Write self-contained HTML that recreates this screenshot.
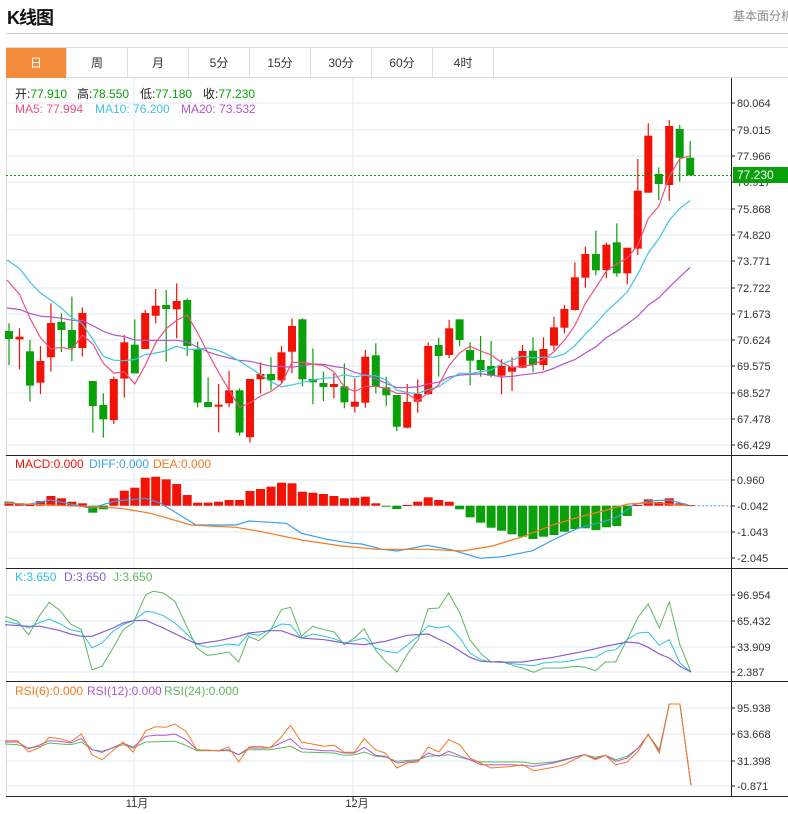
<!DOCTYPE html>
<html><head><meta charset="utf-8">
<style>
html,body{margin:0;padding:0;background:#fff;width:788px;height:814px;overflow:hidden;font-family:"Liberation Sans","Noto Sans CJK SC",sans-serif;}
.title{position:absolute;left:7px;top:4px;font-size:18px;font-weight:bold;color:#111;letter-spacing:-1px}
.rt{position:absolute;left:733px;top:7px;font-size:12px;color:#888;white-space:nowrap}
.hr{position:absolute;left:6px;top:33px;width:782px;height:1px;background:#ccc}
.tabs{position:absolute;left:6px;top:47px;width:782px;height:31px;border-top:1px solid #ddd;border-bottom:1px solid #ddd;box-sizing:border-box}
.tab{position:absolute;top:0;height:30px;width:61px;border-right:1px solid #ddd;box-sizing:border-box;font-size:12px;color:#333;text-align:center;line-height:30px}
.tab.on{background:#f28c3c;color:#fff}
svg{position:absolute;left:0;top:0}
</style></head><body>
<div class="title">K线图</div>
<div class="rt">基本面分析</div>
<div class="hr"></div>
<div class="tabs">
<div class="tab on" style="left:0">日</div>
<div class="tab" style="left:61px">周</div>
<div class="tab" style="left:122px">月</div>
<div class="tab" style="left:183px">5分</div>
<div class="tab" style="left:244px">15分</div>
<div class="tab" style="left:305px">30分</div>
<div class="tab" style="left:366px">60分</div>
<div class="tab" style="left:427px">4时</div>
</div>
<svg id="s" width="788" height="814" xmlns="http://www.w3.org/2000/svg" font-family="Liberation Sans, Noto Sans CJK SC, sans-serif"></svg>
<script>
var S=document.getElementById('s'),h='';
function L(x1,y1,x2,y2,c,w,extra){h+='<line x1="'+x1+'" y1="'+y1+'" x2="'+x2+'" y2="'+y2+'" stroke="'+c+'" stroke-width="'+(w||1)+'" '+(extra||'')+'/>';}
function T(x,y,t,c,s,a){h+='<text x="'+x+'" y="'+y+'" fill="'+c+'" font-size="'+(s||11)+'"'+(a?' text-anchor="'+a+'"':'')+'>'+t+'</text>';}
function P(pts,c,w){h+='<polyline fill="none" stroke="'+c+'" stroke-width="'+(w||1)+'" points="'+pts.map(function(p){return p[0].toFixed(1)+','+p[1].toFixed(1)}).join(' ')+'"/>';}
var G='#e6edf3';
[103,130,156,182,209,235,261,288,314,340,366,393,419,445,480,506,532,558,595,621,647,672,708,734,761,786].forEach(function(y){L(6,y,731,y,G,1.3);});
L(134,78,134,797,G,1.3);L(353,78,353,797,G,1.3);
L(6.5,78,6.5,797,'#ddd');
L(731.5,78,731.5,797,'#222');
[455,568,681,796].forEach(function(y){L(6,y+.5,788,y+.5,'#222');});
function AX(arr){arr.forEach(function(a){L(731,a[1],735,a[1],'#222');T(737,a[1]+4,a[0],'#333',11);});}
AX([['80.064',103],['79.015',130],['77.966',156],['76.917',182],['75.868',209],['74.820',235],['73.771',261],['72.722',288],['71.673',314],['70.624',340],['69.575',366],['68.527',393],['67.478',419],['66.429',445]]);
AX([['0.960',480],['-0.042',506],['-1.043',532],['-2.045',558]]);
AX([['96.954',595],['65.432',621],['33.909',647],['2.387',672]]);
AX([['95.938',708],['63.668',734],['31.398',761],['-0.871',786]]);
T(137,807,'11月','#333',11,'middle');T(357,807,'12月','#333',11,'middle');
L(134,797,134,800,'#222');L(353,797,353,800,'#222');
var A=[['G',183,207,160,285],['R',200,208,175,298],['G',244,347,210,395],['R',273,338,228,372],['R',159,262,100,305],['G',156,180,130,246],['G',180,234,80,274],['R',129,234,112,260],['G',333,408,333,488],['G',405,448,370,503],['R',327,450,320,462],['R',217,326,195,383],['G',224,310,148,310],['R',129,237,120,237],['R',107,137,57,160],['G',105,117,60,275],['R',93,118,40,205],['G',90,228,85,258],['G',238,398,215,412],['G',396,411,322,411],['R',404,410,342,487],['R',361,400,303,412],['G',361,488,355,497],['R',327,502,327,518],['R',312,328,277,370],['G',312,331,262,360],['R',247,331,228,340],['R',168,245,145,310],['G',148,328,145,350],['G',327,337,235,403],['G',339,351,305,393],['R',342,351,310,385],['G',349,397,280,415],['R',395,410,325,428]];
var B=[['R',740,878,720,893],['G',736,830,700,850],['G',832,856,800,888],['G',855,950,855,963],['R',876,953,822,955],['R',852,875,808,908],['R',708,852,697,855],['G',705,738,683,800],['R',655,735,630,745],['G',628,690,628,708],['G',720,752,697,826],['G',750,780,678,800],['G',768,797,693,802],['R',768,797,748,853],['R',770,785,742,843],['R',723,773,705,775],['G',722,765,682,787],['R',717,765,682,780],['R',652,707,620,722],['R',597,653,585,670],['R',502,600,457,602],['R',432,503,410,533],['G',432,481,362,496],['R',404,480,398,505],['G',397,490,340,500],['R',413,490,413,523],['R',242,416,147,435],['R',77,248,40,248],['G',192,222,172,270],['R',48,225,30,273],['G',57,143,45,215],['G',143,196,93,196]];
var C=[];
A.forEach(function(c){C.push([c[0],c[1]/3+270,c[2]/3+270,c[3]/3+270,c[4]/3+270]);});
B.forEach(function(c){C.push([c[0],c[1]/3+110,c[2]/3+110,c[3]/3+110,c[4]/3+110]);});
var RED='#f21306',GRN='#0aa00a',sp=10.48;
var closes=[];
C.forEach(function(c,i){var x=9+i*sp,col=c[0]=='R'?RED:GRN;
 L(x,c[3],x,c[4],col,1.2);
 var hh=Math.max(1.5,c[2]-c[1]);
 h+='<rect x="'+(x-4).toFixed(1)+'" y="'+c[1].toFixed(1)+'" width="8" height="'+hh.toFixed(1)+'" fill="'+col+'"/>';
 closes.push(c[0]=='R'?c[1]:c[2]);});
function MA(N,start){var pad=(N*start-closes[0])/(N-1),out=[];
 for(var i=0;i<closes.length;i++){var s=0;for(var k=i-N+1;k<=i;k++){s+=k<0?pad:closes[k];}out.push([9+i*sp,s/N]);}
 out[0][0]=7;return out;}
P(MA(20,308),'#b455cc',1.2);P(MA(10,260),'#3ec6e0',1.2);P(MA(5,280),'#f0507e',1.2);
L(6,175.5,731,175.5,'#0a9a0a',1,'stroke-dasharray="2,2"');
h+='<rect x="733" y="167" width="55" height="16" fill="#0aa00a"/>';T(737,179,'77.230','#fff',12);
T(15,98,'开:<tspan fill="#0aa00a">77.910</tspan>','#222',12);
T(77,98,'高:<tspan fill="#0aa00a">78.550</tspan>','#222',12);
T(140,98,'低:<tspan fill="#0aa00a">77.180</tspan>','#222',12);
T(203,98,'收:<tspan fill="#0aa00a">77.230</tspan>','#222',12);
T(15,113,'MA5: 77.994','#f0507e',12);T(95,113,'MA10: 76.200','#3ec6e0',12);T(181,113,'MA20: 73.532','#b455cc',12);
T(15,468,'MACD:0.000','#f21306',12);T(89,468,'DIFF:0.000','#3a9ef0',12);T(153,468,'DEA:0.000','#f57a1e',12);
var M=[185,190,195,183,168,175,185,190,218,208,175,152,143,113,110,118,132,165,188,188,185,180,180,153,147,140,128,130,155,158,162,168,175,173,170,190,200,207,195,185,172,180,185,208,232,248,263,272,283,290,297,290,285,275,267,265,270,262,258,228,195,178,186,175,190,195];
var z=505.7;
M.forEach(function(v,i){var x=9+i*sp,y=v/3+440,col=y<z?RED:GRN;var t=Math.min(y,z),hh=Math.max(1,Math.abs(y-z));
 h+='<rect x="'+(x-4.5).toFixed(1)+'" y="'+t.toFixed(1)+'" width="9" height="'+hh.toFixed(1)+'" fill="'+col+'"/>';});
function cv(a,oy){return a.map(function(p){return [p[0]/1.99,p[1]/3+oy];});}
P(cv([[10,185],[50,195],[100,180],[150,195],[180,205],[230,183],[290,175],[320,190],[390,255],[470,255],[495,243],[570,250],[600,280],[650,298],[700,310],[720,312],[760,328],[790,333],[850,316],[900,330],[955,355],[1000,350],[1060,332],[1100,300],[1150,265],[1200,245],[1230,230],[1260,195],[1290,183],[1330,180],[1370,195]],440),'#3a9ef0',1.2);
P(cv([[10,190],[100,195],[180,200],[240,205],[300,220],[380,255],[470,262],[520,275],[600,300],[680,318],[750,328],[850,328],[920,333],[980,318],[1040,290],[1100,255],[1150,232],[1200,213],[1250,192],[1300,188],[1370,197]],440),'#f57a1e',1.2);
L(690,z,731,z,'#7ab8e8',1,'stroke-dasharray="2,2"');
T(15,581,'K:3.650','#2ec4dd',12);T(64,581,'D:3.650','#8a5cd0',12);T(113,581,'J:3.650','#5cb85c',12);
P(cv([[10,145],[35,160],[57,200],[80,140],[98,103],[120,128],[140,168],[162,185],[183,305],[203,295],[225,240],[245,185],[265,165],[290,80],[305,70],[325,75],[348,100],[370,170],[392,240],[412,262],[435,258],[455,252],[475,282],[495,205],[515,218],[537,190],[560,125],[578,118],[600,205],[622,175],[645,185],[665,192],[685,230],[705,210],[725,182],[747,245],[767,280],[790,312],[810,260],[832,215],[852,122],[873,120],[893,75],[915,135],[935,215],[957,257],[977,282],[997,280],[1020,292],[1040,300],[1062,313],[1082,300],[1102,300],[1122,300],[1143,295],[1163,297],[1185,308],[1205,282],[1225,282],[1248,215],[1270,147],[1290,108],[1312,180],[1332,102],[1353,230],[1375,312]],568),'#5cb85c',1);
P(cv([[10,160],[35,168],[57,180],[80,163],[98,153],[120,168],[140,185],[162,192],[183,240],[203,225],[225,190],[245,170],[265,158],[290,130],[305,133],[325,143],[348,165],[370,195],[392,228],[412,238],[435,233],[455,228],[475,232],[495,197],[515,202],[537,185],[560,168],[578,170],[600,210],[622,198],[645,205],[665,212],[685,225],[705,218],[725,210],[747,240],[767,250],[790,255],[810,232],[832,205],[852,173],[873,180],[893,175],[915,210],[935,255],[957,275],[977,282],[997,282],[1020,287],[1040,290],[1062,293],[1082,285],[1102,282],[1122,282],[1143,277],[1163,270],[1185,268],[1205,250],[1225,245],[1248,215],[1270,195],[1290,193],[1312,232],[1332,215],[1353,285],[1375,312]],568),'#2ec4dd',1);
P(cv([[10,170],[57,175],[80,175],[120,188],[140,198],[162,205],[183,205],[225,180],[245,165],[265,158],[290,157],[325,180],[370,213],[392,228],[435,218],[475,205],[495,195],[537,188],[560,188],[600,210],[645,215],[685,225],[725,230],[767,220],[810,202],[852,198],[893,228],[935,268],[957,280],[997,283],[1040,282],[1100,268],[1163,250],[1205,235],[1248,222],[1270,225],[1290,238],[1312,258],[1332,270],[1353,295],[1375,312]],568),'#8a5cd0',1.2);
T(15,695,'RSI(6):0.000','#f57a1e',12);T(87,695,'RSI(12):0.000','#b455cc',12);T(164,695,'RSI(24):0.000','#5cb85c',12);
P(cv([[10,528],[35,530],[57,540],[80,535],[98,525],[140,530],[162,522],[183,545],[203,550],[245,530],[265,540],[290,522],[348,520],[370,532],[392,548],[455,548],[475,560],[495,545],[537,545],[578,535],[600,552],[665,555],[685,562],[705,560],[725,552],[747,565],[767,567],[790,580],[832,575],[852,565],[893,560],[935,575],[957,582],[1040,582],[1062,587],[1102,582],[1163,560],[1185,568],[1205,562],[1225,575],[1248,565],[1270,540],[1290,500],[1312,545],[1332,408],[1353,408],[1375,652]],568),'#5cb85c',1);
P(cv([[10,522],[35,522],[57,542],[80,530],[98,518],[120,520],[140,525],[162,512],[183,545],[203,553],[245,525],[265,538],[290,505],[310,502],[330,502],[348,498],[370,515],[392,545],[435,548],[455,545],[475,560],[495,540],[537,540],[578,512],[600,542],[645,548],[665,548],[685,555],[705,555],[725,538],[747,562],[767,565],[790,585],[832,578],[852,555],[873,565],[893,550],[935,575],[957,590],[1020,590],[1062,595],[1102,585],[1163,560],[1185,572],[1205,562],[1225,580],[1248,570],[1270,540],[1290,500],[1312,550],[1332,408],[1353,408],[1375,652]],568),'#b455cc',1);
P(cv([[10,518],[35,518],[57,552],[80,538],[98,508],[120,512],[140,522],[162,498],[183,560],[203,575],[245,522],[265,552],[290,488],[310,476],[330,478],[348,468],[370,490],[392,545],[435,548],[455,537],[475,582],[495,537],[515,535],[537,540],[558,510],[578,472],[600,522],[645,535],[665,532],[685,553],[705,553],[725,512],[747,545],[767,555],[790,600],[810,585],[832,582],[852,537],[873,552],[893,515],[915,530],[935,570],[977,600],[1020,595],[1040,590],[1062,608],[1102,598],[1122,590],[1163,560],[1185,575],[1205,562],[1225,590],[1248,582],[1270,550],[1290,498],[1312,555],[1332,408],[1353,408],[1375,652]],568),'#f57a1e',1);
S.innerHTML=h;
</script>
</body></html>
